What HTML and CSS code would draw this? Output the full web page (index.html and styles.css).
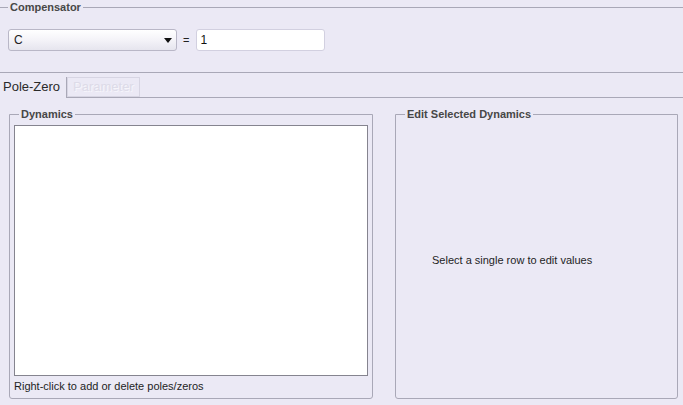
FILE: index.html
```html
<!DOCTYPE html>
<html>
<head>
<meta charset="utf-8">
<link rel="stylesheet" href="styles.css">
</head>
<body>
<div class="comp">
  <fieldset class="comp-group">
    <legend>Compensator</legend>
    <div class="comp-row">
      <div class="select">
        <span>C</span>
        <svg class="arrow" width="8" height="5" viewBox="0 0 8 5"><path d="M0 0H8L4 5Z" fill="#111"/></svg>
      </div>
      <span class="eq">=</span>
      <div class="input">1</div>
    </div>
  </fieldset>
</div>
<div class="tabs">
  <div class="tab active">Pole-Zero</div>
  <div class="tab disabled"><div class="tab-label">Parameter</div></div>
  <div class="tab-fill"></div>
</div>
<div class="panel">
  <fieldset class="group dyn">
    <legend>Dynamics</legend>
    <div class="list"></div>
    <div class="hint">Right-click to add or delete poles/zeros</div>
  </fieldset>
  <fieldset class="group edit">
    <legend>Edit Selected Dynamics</legend>
    <div class="edit-body">Select a single row to edit values</div>
  </fieldset>
</div>
</body>
</html>
```

FILE: styles.css
```css
* { box-sizing: border-box; }
html, body {
  margin: 0;
  padding: 0;
  background: #ebe9f5;
  font-family: "Liberation Sans", Arial, sans-serif;
  color: #1a1a1a;
  width: 683px;
  height: 405px;
  overflow: hidden;
}
.comp {
  height: 73px;
  border-bottom: 1px solid #a9a8b7;
}
.comp-group {
  margin: 0;
  padding: 0 0 0 8px;
  border: none;
  border-top: 1px solid #a9a8b7;
  min-width: 0;
}
legend {
  font-size: 11px;
  font-weight: bold;
  line-height: 14px;
  color: #474747;
  padding: 0 2px;
}
.comp-row {
  display: flex;
  align-items: center;
  margin-top: 15px;
}
.select {
  width: 169px;
  height: 22px;
  border: 1px solid #b9b7c7;
  border-radius: 3px;
  background: linear-gradient(#ffffff, #f4f3f8 50%, #e6e5ee);
  display: flex;
  align-items: center;
  justify-content: space-between;
  padding: 0 3px 0 5px;
  font-size: 12px;
  color: #222;
}
.arrow { margin-right: 1px; margin-top: 1px; }
.eq {
  font-size: 11px;
  margin: 0 7px 0 6px;
  color: #222;
}
.input {
  width: 129px;
  height: 22px;
  background: #fff;
  border: 1px solid #d2d0e0;
  border-radius: 3px;
  font-size: 12px;
  line-height: 20px;
  padding-left: 3px;
  color: #111;
}
.tabs {
  display: flex;
  height: 25px;
}
.tab {
  margin-top: 4px;
  font-size: 13px;
}
.tab.active {
  width: 67px;
  border-right: 1px solid #a9a8b7;
  padding: 2px 0 0 3px;
  color: #2a2a2a;
}
.tab.disabled {
  width: 73px;
  border-bottom: 1px solid #a9a8b7;
}
.tab-label {
  height: 20px;
  border: 1px solid #d7d5e3;
  color: #dddbe8;
  text-shadow: 1px 1px 0 #f6f5fb;
  padding: 1px 0 0 5px;
}
.tab-fill {
  flex: 1;
  border-bottom: 1px solid #a9a8b7;
}
.panel {
  display: flex;
  gap: 22px;
  padding: 9px 0 0 9px;
}
.group {
  margin: 0;
  padding: 0 4px;
  border: 1px solid #a9a8b7;
  border-radius: 0 0 3px 3px;
  height: 292px;
  min-width: 0;
}
.group legend { margin-left: 5px; }
.dyn { width: 364px; }
.edit { width: 283px; }
.list {
  margin-top: 4px;
  height: 251px;
  background: #fff;
  border: 1px solid #85848f;
}
.hint {
  margin-top: 3px;
  font-size: 11px;
  line-height: 14px;
  color: #1e1e1e;
}
.edit-body {
  height: 277px;
  display: flex;
  align-items: center;
  padding-left: 32px;
  font-size: 11px;
  color: #1e1e1e;
}
```
